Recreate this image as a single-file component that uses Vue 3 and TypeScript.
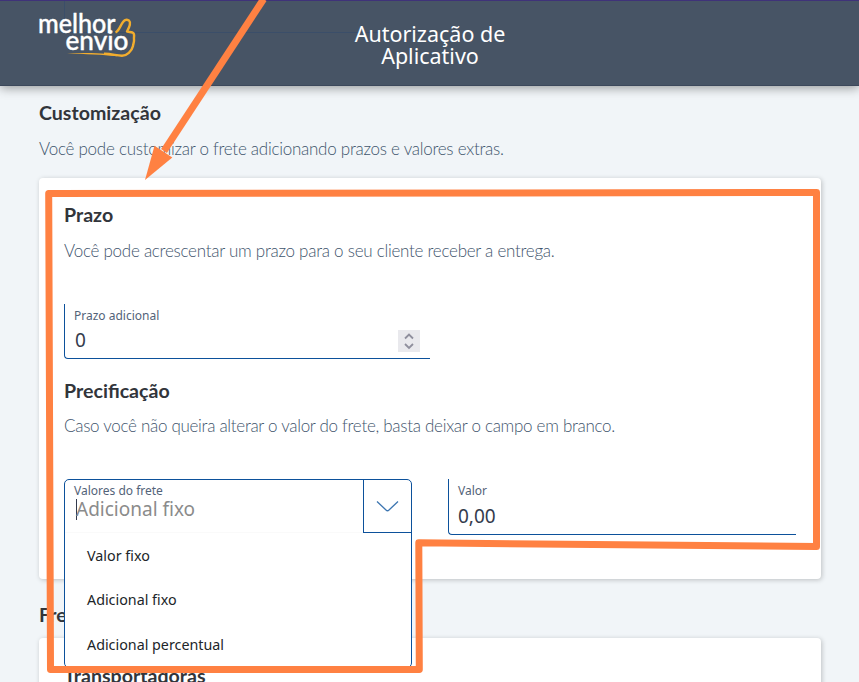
<script setup lang="ts">
import { ref } from 'vue'

interface RateOption {
  id: string
  label: string
}

const options: RateOption[] = [
  { id: 'fixed', label: 'Valor fixo' },
  { id: 'extra', label: 'Adicional fixo' },
  { id: 'percent', label: 'Adicional percentual' },
]

const selected = ref('Adicional fixo')
const days = ref(0)
const price = ref('0,00')

function choose(option: RateOption): void {
  selected.value = option.label
}
</script>

<template>
  <div class="page">
    <header class="topbar">
      <div class="scrolled-field"></div>
      <svg class="logo" width="100" height="50" viewBox="0 0 100 50" aria-label="melhor envio">
        <g class="logo-word">
          <text x="-1" y="23.300" font-size="26.500" textLength="77.500" lengthAdjust="spacingAndGlyphs">melhor</text>
          <text x="26.500" y="40" font-size="26.500" textLength="63" lengthAdjust="spacingAndGlyphs">envio</text>
        </g>
        <path
          class="logo-hand"
          d="M76.500 22.500 C80 21 81 16 84 12 C86 9 88 9.500 90 10.500 C92 12.500 90.500 17 88 21.500 L93.500 22.500 C96.500 24 94.500 27 95 29 C95.500 32 94 34 94 36 C93 41 87.500 45.800 83 45.800 C77 45.500 73 44 65 43.800"
        />
        <path class="logo-line" d="M28 43 C45 42.700 68 42.800 79 45 L78 46.300 C65 44.300 45 44.400 28 43 Z" />
      </svg>
      <h1>Autorização de<br />Aplicativo</h1>
    </header>

    <main>
      <h2 class="title">Customização</h2>
      <p class="lead first">Você pode customizar o frete adicionando prazos e valores extras.</p>

      <section class="card settings">
        <h2 class="title">Prazo</h2>
        <p class="lead">Você pode acrescentar um prazo para o seu cliente receber a entrega.</p>
        <div class="field deadline">
          <span class="label">Prazo adicional</span>
          <span class="value">{{ days }}</span>
          <span class="stepper">
            <svg width="22" height="22" viewBox="0 0 22 22">
              <path d="M7 8.500 L11 4.500 L15 8.500 M7 14 L11 18 L15 14" />
            </svg>
          </span>
        </div>

        <h2 class="title">Precificação</h2>
        <p class="lead pricing">Caso você não queira alterar o valor do frete, basta deixar o campo em branco.</p>
        <div class="row">
          <div class="select-slot">
            <div class="select">
              <div class="select-head">
                <div class="select-text">
                  <span class="label">Valores do frete</span>
                  <span class="placeholder">{{ selected }}</span>
                </div>
                <div class="chevron">
                  <svg width="24" height="14" viewBox="0 0 24 14">
                    <path d="M1 2.500 L10 11 Q11.500 12.500 13 11 L22 2.500" />
                  </svg>
                </div>
              </div>
              <ul>
                <li v-for="option in options" :key="option.id" @click="choose(option)">{{ option.label }}</li>
              </ul>
            </div>
          </div>
          <div class="field amount">
            <span class="label">Valor</span>
            <span class="value">{{ price }}</span>
          </div>
        </div>
      </section>

      <h2 class="title next">Frete</h2>
      <section class="card carriers">
        <h2 class="title">Transportadoras</h2>
      </section>
    </main>

    <svg class="callout" width="859" height="682" viewBox="0 0 859 682">
      <path class="frame" d="M48.700 193.500 L816.500 192.500 V546.500 L418.800 542.800 L419.300 669.500 H50.500 Z" />
      <path class="shaft" d="M263.600 -1 L164 151" />
      <path class="head" d="M145 180 L154.500 145.700 L172.300 157.500 Z" />
    </svg>
  </div>
</template>

<style>
body {
  background: #f1f5f8;
}
</style>

<style scoped>
.page {
  position: relative;
  box-sizing: border-box;
  width: 859px;
  height: 682px;
  overflow: hidden;
  background: #f1f5f8;
  font-family: 'Noto Sans', sans-serif;
  color: #343b4d;
}
.topbar {
  position: relative;
  box-sizing: border-box;
  height: 86px;
  padding: 22px 0 0 1px;
  background: #475465;
  border-top: 1px solid #3f3279;
  border-bottom: 1px solid #3c485b;
  box-shadow: 0 2px 10px rgba(0, 0, 0, 0.38);
}
.scrolled-field {
  position: absolute;
  left: 64px;
  top: 0;
  width: 365px;
  height: 31px;
  border-left: 1px solid #3b4e69;
  border-bottom: 1px solid #3b4e69;
  border-radius: 0 0 0 4px;
}
.logo {
  position: absolute;
  left: 39px;
  top: 9px;
  overflow: visible;
}
.logo-word {
  fill: #fff;
  stroke: #fff;
  stroke-width: 0.35;
  stroke-linejoin: round;
  font-family: 'Lato', sans-serif;
  font-weight: 500;
}
.logo-hand {
  fill: none;
  stroke: #f2ad2e;
  stroke-width: 2.4;
  stroke-linejoin: round;
}
.logo-line {
  fill: #f2ad2e;
}
h1 {
  margin: 0;
  text-align: center;
  font-size: 21.500px;
  line-height: 22px;
  font-weight: 400;
  color: #fff;
  position: relative;
}
main {
  padding: 14px 38px 0 39px;
}
.title {
  margin: 0;
  font-family: 'Lato', sans-serif;
  font-size: 19.600px;
  line-height: 26px;
  font-weight: 700;
  color: #32353b;
}
.lead {
  margin: 10px 0 0;
  font-family: 'Lato', sans-serif;
  font-size: 17px;
  line-height: 26px;
  font-weight: 300;
  letter-spacing: -0.260px;
  color: #3f556d;
  white-space: nowrap;
}
.lead.first {
  margin-bottom: 16px;
}
.lead.pricing {
  margin-top: 9px;
  letter-spacing: -0.290px;
}
.card {
  box-sizing: border-box;
  background: #fff;
  border-radius: 4px;
  box-shadow: 1px 1px 5px rgba(0, 0, 0, 0.22);
}
.settings {
  height: 401px;
  padding: 24px 25px 0;
}
.field {
  position: relative;
  box-sizing: border-box;
  display: flex;
  flex-direction: column;
  border-left: 1px solid #0c519b;
  border-bottom: 1px solid #0c519b;
  border-radius: 0 0 0 4px;
  padding-left: 9px;
}
.label {
  font-size: 12px;
  line-height: 16px;
  color: #536379;
}
.value {
  font-size: 19px;
  line-height: 26px;
  color: #343b4d;
}
.deadline {
  width: 366px;
  height: 55px;
  margin: 40px 0 19px;
  padding-top: 4px;
}
.deadline .value {
  margin-top: 3px;
  padding-left: 1px;
}
.amount .value {
  margin-top: 4px;
}
.stepper {
  position: absolute;
  right: 10px;
  top: 26px;
  width: 22px;
  height: 22px;
  background: #e9e9ed;
}
.stepper svg {
  display: block;
}
.stepper path {
  fill: none;
  stroke: #8f8f9d;
  stroke-width: 1.8;
}
.row {
  display: flex;
  gap: 36px;
  margin-top: 40px;
}
.select-slot {
  position: relative;
  width: 348px;
  height: 56px;
}
.select {
  position: absolute;
  z-index: 1;
  inset: 0 0 auto;
  box-sizing: border-box;
  height: 189px;
  border: 1px solid #0c519b;
  border-radius: 5px;
  background: #fff;
}
.select-head {
  display: flex;
  height: 53px;
}
.select-text {
  flex: 1;
  display: flex;
  flex-direction: column;
  padding: 3px 0 0 9px;
  border-bottom: 1px solid #fafafa;
  box-sizing: border-box;
}
.placeholder {
  align-self: flex-start;
  margin: 0 0 0 2px;
  border-left: 1px solid #343b4d;
  font-size: 19px;
  line-height: 21px;
  text-indent: -1px;
  color: #8b8b8b;
}
.chevron {
  box-sizing: border-box;
  display: flex;
  align-items: center;
  justify-content: center;
  width: 48px;
  border-left: 1px solid #0c519b;
  border-bottom: 1px solid #0c519b;
}
.chevron path {
  fill: none;
  stroke: #3d76b1;
  stroke-width: 1.3;
}
ul {
  margin: 0;
  padding: 1px 0 0;
  list-style: none;
}
li {
  padding-left: 22px;
  font-size: 14.300px;
  line-height: 44.400px;
  color: #212529;
}
.amount {
  width: 348px;
  height: 56px;
  padding-top: 4px;
}
.next {
  margin: 23px 0 10px;
}
.carriers {
  height: 120px;
  padding: 25px 25px 0;
}
.callout {
  position: absolute;
  z-index: 2;
  left: 0;
  top: 0;
  pointer-events: none;
}
.frame,
.shaft {
  fill: none;
  stroke: #ff8142;
  stroke-width: 7;
  stroke-linejoin: round;
}
.head {
  fill: #ff8142;
}
</style>
